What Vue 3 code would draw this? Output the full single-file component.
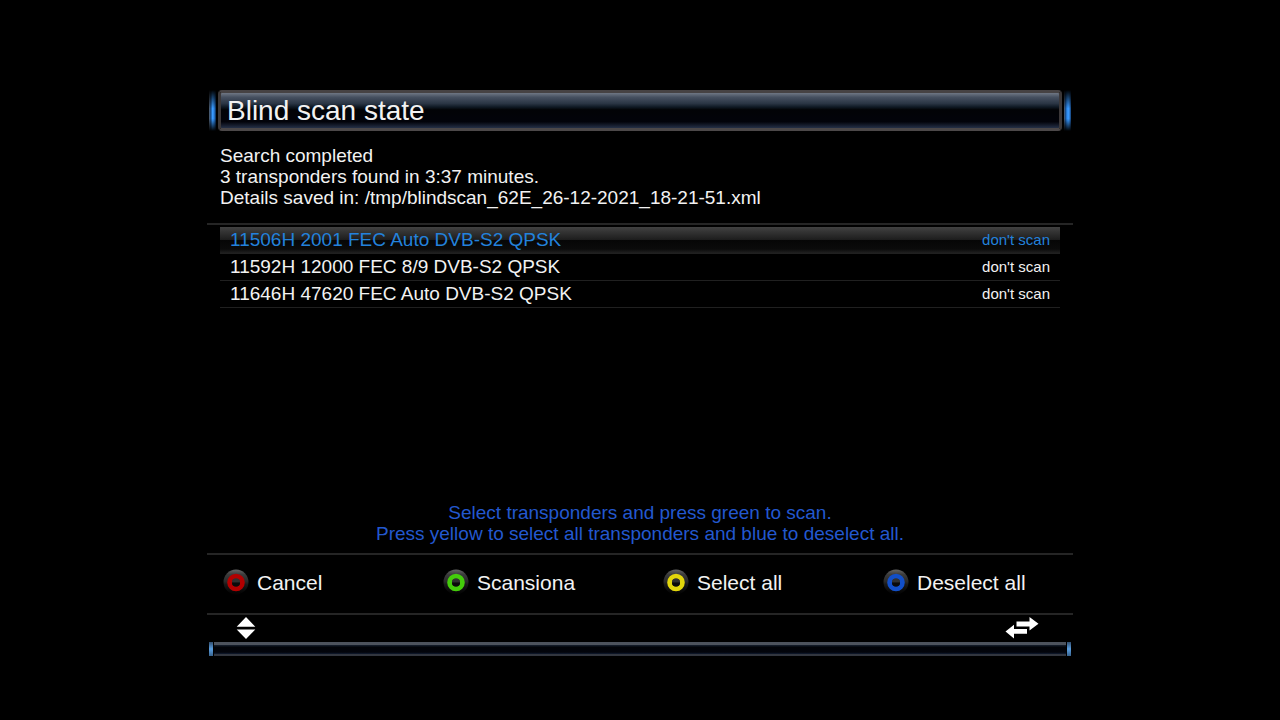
<script setup>
import { ref } from 'vue'

const transponders = ref([
  { name: '11506H 2001 FEC Auto DVB-S2 QPSK', state: "don't scan" },
  { name: '11592H 12000 FEC 8/9 DVB-S2 QPSK', state: "don't scan" },
  { name: '11646H 47620 FEC Auto DVB-S2 QPSK', state: "don't scan" },
])
const selected = ref(0)

const actions = [
  { label: 'Cancel', tone: 'red' },
  { label: 'Scansiona', tone: 'green' },
  { label: 'Select all', tone: 'yellow' },
  { label: 'Deselect all', tone: 'blue' },
]
</script>

<template>
  <main class="screen">
    <header class="title-bar">
      <span class="cap"></span>
      <h1 class="title">Blind scan state</h1>
      <span class="cap right"></span>
    </header>

    <div class="status">
      <p>Search completed</p>
      <p>3 transponders found in 3:37 minutes.</p>
      <p>Details saved in: /tmp/blindscan_62E_26-12-2021_18-21-51.xml</p>
    </div>

    <ul class="list">
      <li v-for="(item, i) in transponders" :key="item.name">
        <button type="button" class="row" :class="{ active: i === selected }" @click="selected = i">
          <span>{{ item.name }}</span>
          <span class="state">{{ item.state }}</span>
        </button>
      </li>
    </ul>

    <div class="hint">
      <p>Select transponders and press green to scan.</p>
      <p>Press yellow to select all transponders and blue to deselect all.</p>
    </div>

    <nav class="actions">
      <button v-for="action in actions" :key="action.label" type="button" class="action">
        <svg class="lamp" :class="action.tone" viewBox="0 0 26 26" aria-hidden="true">
          <defs>
            <linearGradient :id="'dome-' + action.tone" x1="0" y1="0" x2="0" y2="1">
              <stop offset="0" stop-color="#666" />
              <stop offset=".2" stop-color="#3c3c3c" />
              <stop offset=".48" stop-color="#2a2a2a" />
              <stop offset=".6" stop-color="#191919" />
              <stop offset=".95" stop-color="#040404" />
            </linearGradient>
          </defs>
          <circle cx="13" cy="13" r="12.5" :fill="`url(#dome-${action.tone})`" />
          <circle class="ring" cx="13" cy="13.5" r="6.4" />
          <path d="M9 13.5a4 4 0 0 1 8 0z" fill="#303030" />
          <path d="M9 13.5a4 4 0 0 0 8 0z" fill="#0a0a0a" />
        </svg>
        <span>{{ action.label }}</span>
      </button>
    </nav>

    <footer class="footer">
      <div class="arrows">
        <svg width="20" height="22" viewBox="0 0 20 22" aria-hidden="true">
          <path d="M10 0L19.300 9.700H.7zM.7 12.500h18.600L10 22z" fill="#fff" />
        </svg>
        <svg width="34" height="22" viewBox="0 0 34 22" aria-hidden="true">
          <path d="M11.500 4.500H24.500V0L33.500 6.700 24.500 13.500V9.500H11.500z" fill="#fff" />
          <path d="M22 16.800H9v4.700L.5 14.500 9 7.700V12H22z" fill="#fff" />
        </svg>
      </div>
      <div class="base">
        <span class="base-cap"></span>
        <span class="base-bar"></span>
        <span class="base-cap"></span>
      </div>
    </footer>
  </main>
</template>

<style>
body {
  background: #000;
}
</style>

<style scoped>
.screen {
  box-sizing: border-box;
  min-height: 100vh;
  padding: 90px 207px 64px;
  display: flex;
  flex-direction: column;
  background: #000;
  color: #f2f2f2;
  font: 19px/21px "Liberation Sans", Arial, sans-serif;
}

p,
h1,
ul {
  margin: 0;
  padding: 0;
}

button {
  border: 0;
  background: none;
  color: inherit;
  font: inherit;
  text-align: left;
  cursor: pointer;
}

.title-bar {
  display: flex;
  gap: 2px;
  margin: 0 2px;
}

.cap {
  width: 7px;
  background:
    linear-gradient(#000, transparent 45%, transparent 70%, #000),
    linear-gradient(90deg, #5a6068, #164a88 25%, #3b9bff 50%, #2b84e4 72%, #0a2548);
}

.cap.right {
  background:
    linear-gradient(#000, transparent 45%, transparent 70%, #000),
    linear-gradient(90deg, #5a6068, #164a88 20%, #2f8df2 45%, #3b9bff 70%, #123c70);
}

.title {
  flex: 1;
  box-sizing: border-box;
  height: 41px;
  padding-left: 6px;
  border: 3px solid;
  border-color: #464243 #3c3839 #4c4849;
  border-radius: 4px;
  background: linear-gradient(#6f7784, #465060 12%, #2a3544 30%, #0f1924 40%, #020306 48%, #02030a 82%, #253047);
  font-size: 28px;
  font-weight: 400;
  line-height: 35px;
}

.status {
  padding: 14px 13px 15px;
  border-bottom: 2px solid #252525;
}

.list {
  flex: 1;
  margin: 2px 13px 0;
  list-style: none;
}

.row {
  display: flex;
  justify-content: space-between;
  align-items: center;
  box-sizing: border-box;
  width: 100%;
  height: 27px;
  padding: 0 10px 1px;
  border-bottom: 1px solid #202020;
}

.row.active {
  background: linear-gradient(#414141, #1e1e1e 48%, #060606 52%, #0b0b0b 85%, #202020);
  color: #2382dc;
}

.state {
  font-size: 15px;
}

.hint {
  padding-bottom: 9px;
  border-bottom: 2px solid #252525;
  color: #2358cf;
  text-align: center;
}

.actions {
  display: grid;
  grid-template-columns: repeat(3, 1fr) 193px;
  height: 58px;
  padding-left: 13px;
  border-bottom: 2px solid #252525;
}

.action {
  display: flex;
  align-items: center;
  gap: 8px;
  padding: 0 3px 4px;
  font-size: 21px;
}

.lamp {
  width: 26px;
  height: 26px;
}

.ring {
  fill: none;
  stroke-width: 4.8;
}

.red .ring { stroke: #b20000; }
.green .ring { stroke: #44cc0b; }
.yellow .ring { stroke: #e2d60c; }
.blue .ring { stroke: #124fc8; }

.footer {
  margin: 0 2px;
}

.arrows {
  display: flex;
  justify-content: space-between;
  padding: 2px 32px 3px 27px;
}

.base {
  display: flex;
  gap: 1px;
  height: 14px;
}

.base-cap {
  width: 4px;
  background: linear-gradient(#314e6e, #5a9edf 50%, #38638e);
}

.base-bar {
  flex: 1;
  box-sizing: border-box;
  border-top: 3px solid #4d535d;
  border-bottom: 2px solid #32363f;
  background: linear-gradient(#16202f, #020409 25%, #02040b 80%, #101b30);
}
</style>
